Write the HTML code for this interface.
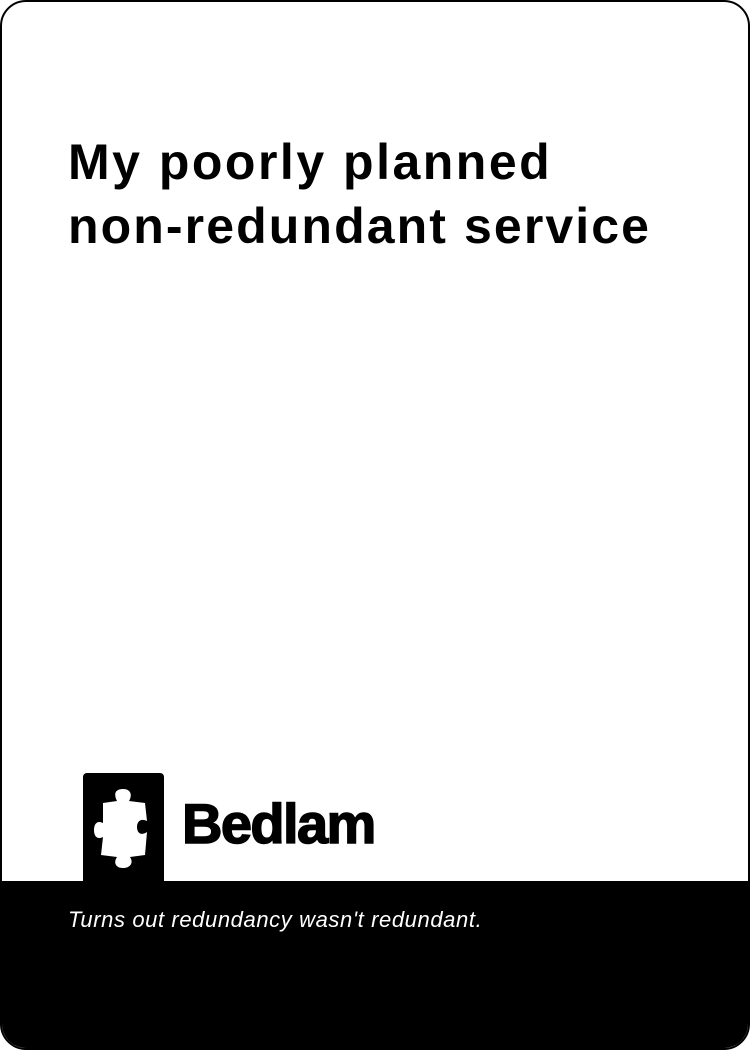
<!DOCTYPE html>
<html><head><style>
html,body{margin:0;padding:0;background:#fff;}
.card{position:absolute;left:0;top:0;width:746px;height:1046px;border:2px solid #000;border-radius:26px;overflow:hidden;background:#fff;}
h1{position:absolute;left:66px;top:128px;margin:0;font:bold 50px/64px "Liberation Sans",sans-serif;color:#000;letter-spacing:2.1px;}
.l1{letter-spacing:2.5px;}
.band{position:absolute;left:0;top:879px;width:746px;height:170px;background:#000;}
.tag{position:absolute;left:66px;top:905px;font:italic 22px "Liberation Sans",sans-serif;color:#fff;letter-spacing:0.6px;}
.logo{position:absolute;left:81px;top:771px;width:81px;height:112px;background:#000;border-radius:4px 4px 0 0;}
.word{position:absolute;left:180px;top:794px;font:bold 56px/1 "Liberation Sans",sans-serif;letter-spacing:-1.6px;color:#000;-webkit-text-stroke:1.5px #000;}
</style></head><body>
<div class="card">
<h1><span class="l1">My poorly planned</span><br>non-redundant service</h1>
<div class="logo">
<svg width="81" height="112" viewBox="0 0 81 112">
<path fill="#fff" d="M20 30 L34 28 C30 20 33 16 40 16 C47 16 50 21 46 28 L62 30 L64 48 C58 45 54 48 54 54 C54 60 58 63 64 59 L62 82 L47 84 C51 90 47 95 40 95 C33 95 30 90 34 84 L18 82 L20 64 C14 67 11 63 11 57 C11 51 14 47 20 50 Z"/>
</svg>
</div>
<div class="word">Bedlam</div>
<div class="band"></div>
<div class="tag">Turns out redundancy wasn't redundant.</div>
</div>
</body></html>
